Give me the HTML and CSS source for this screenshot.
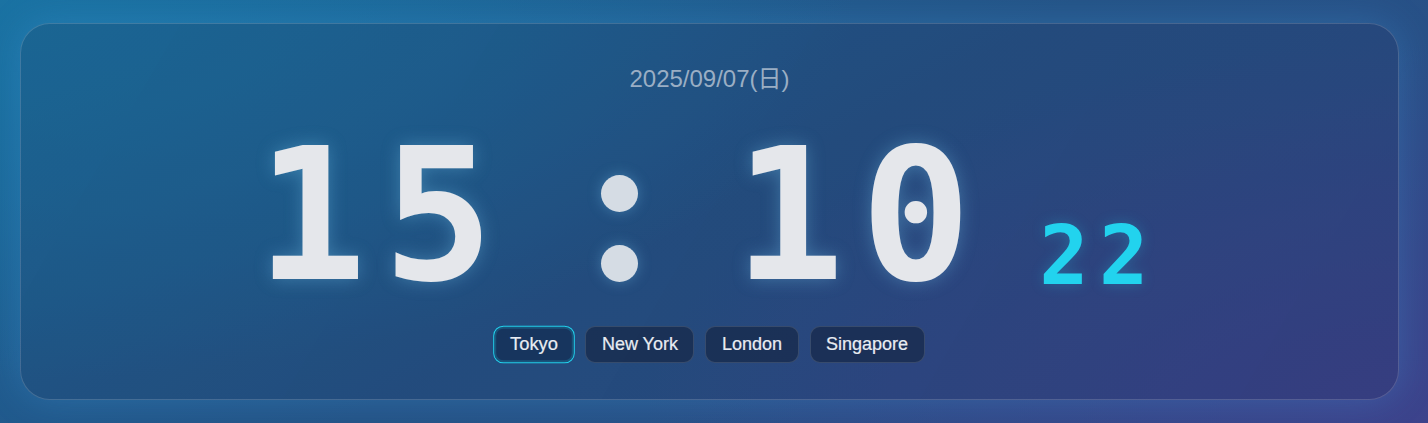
FILE: index.html
```html
<!DOCTYPE html>
<html lang="ja">
<head>
<meta charset="utf-8">
<title>World Clock</title>
<link rel="stylesheet" href="styles.css">
</head>
<body>
<main class="card">
  <div class="date">2025/09/07(日)</div>
  <div class="clock">
    <span class="hours">15</span>
    <span class="colon"><i class="dot"></i><i class="dot"></i></span>
    <span class="minutes">10</span>
    <span class="seconds">22</span>
  </div>
  <nav class="cities">
    <button class="city active">Tokyo</button>
    <button class="city">New York</button>
    <button class="city">London</button>
    <button class="city">Singapore</button>
  </nav>
</main>
</body>
</html>
```

FILE: styles.css
```css
html, body {
  margin: 0;
  height: 100%;
}
body {
  background:
    radial-gradient(ellipse 60% 90% at 0% 0%, rgba(26, 116, 164, 0.85), rgba(26, 116, 164, 0) 100%),
    radial-gradient(ellipse 55% 90% at 100% 100%, rgba(62, 66, 140, 0.9), rgba(62, 66, 140, 0) 100%),
    linear-gradient(150deg, #1a689a 0%, #245386 50%, #2f4c88 100%);
  padding: 23px 29px 23px 20px;
  box-sizing: border-box;
  overflow: hidden;
  font-family: "Liberation Sans", Arial, sans-serif;
}
.card {
  box-sizing: border-box;
  height: 377px;
  border-radius: 30px;
  border: 1px solid rgba(255, 255, 255, 0.16);
  background: linear-gradient(120deg, rgba(30, 55, 90, 0.2), rgba(35, 40, 90, 0.22));
  box-shadow: 0 0 36px rgba(70, 160, 230, 0.28);
  display: flex;
  flex-direction: column;
  align-items: center;
  padding-top: 41px;
}
.date {
  font-family: "Liberation Sans", "Noto Sans CJK JP", sans-serif;
  font-size: 24px;
  line-height: 28px;
  color: #9aaec4;
}
.clock {
  margin-top: 30px;
  display: flex;
  align-items: flex-end;
  justify-content: center;
  font-family: "DejaVu Sans Mono", monospace;
  font-weight: bold;
  color: #e5e7eb;
}
.hours, .minutes {
  font-size: 184px;
  line-height: 1;
  letter-spacing: 16px;
  text-shadow: 0 0 18px rgba(120, 200, 240, 0.35);
}
.colon {
  display: flex;
  flex-direction: column;
  gap: 33px;
  margin: 0 96px 25px 91px;
}
.dot {
  display: block;
  width: 37px;
  height: 37px;
  border-radius: 50%;
  background: #d5dce4;
  box-shadow: 0 0 14px rgba(120, 200, 240, 0.35);
}
.seconds {
  font-size: 82px;
  line-height: 1;
  letter-spacing: 10.5px;
  color: #22d3ee;
  margin: 0 4px 10px 52px;
  text-shadow: 0 0 14px rgba(34, 211, 238, 0.25);
}
.cities {
  margin-top: 19px;
  display: flex;
  gap: 11px;
}
.city {
  font-family: "Liberation Sans", Arial, sans-serif;
  font-size: 18px;
  line-height: 21px;
  padding: 7px 15.5px;
  color: #e8ecf2;
  background: rgba(22, 40, 72, 0.72);
  border: 1px solid rgba(255, 255, 255, 0.13);
  border-radius: 10px;
  -webkit-text-stroke: 0.2px #e8ecf2;
}
.city.active {
  border-color: #22d3ee;
  box-shadow: inset 0 0 0 2px rgba(34, 211, 238, 0.2);
  background: rgba(20, 48, 86, 0.8);
  transform: scale(1.02);
}
```
